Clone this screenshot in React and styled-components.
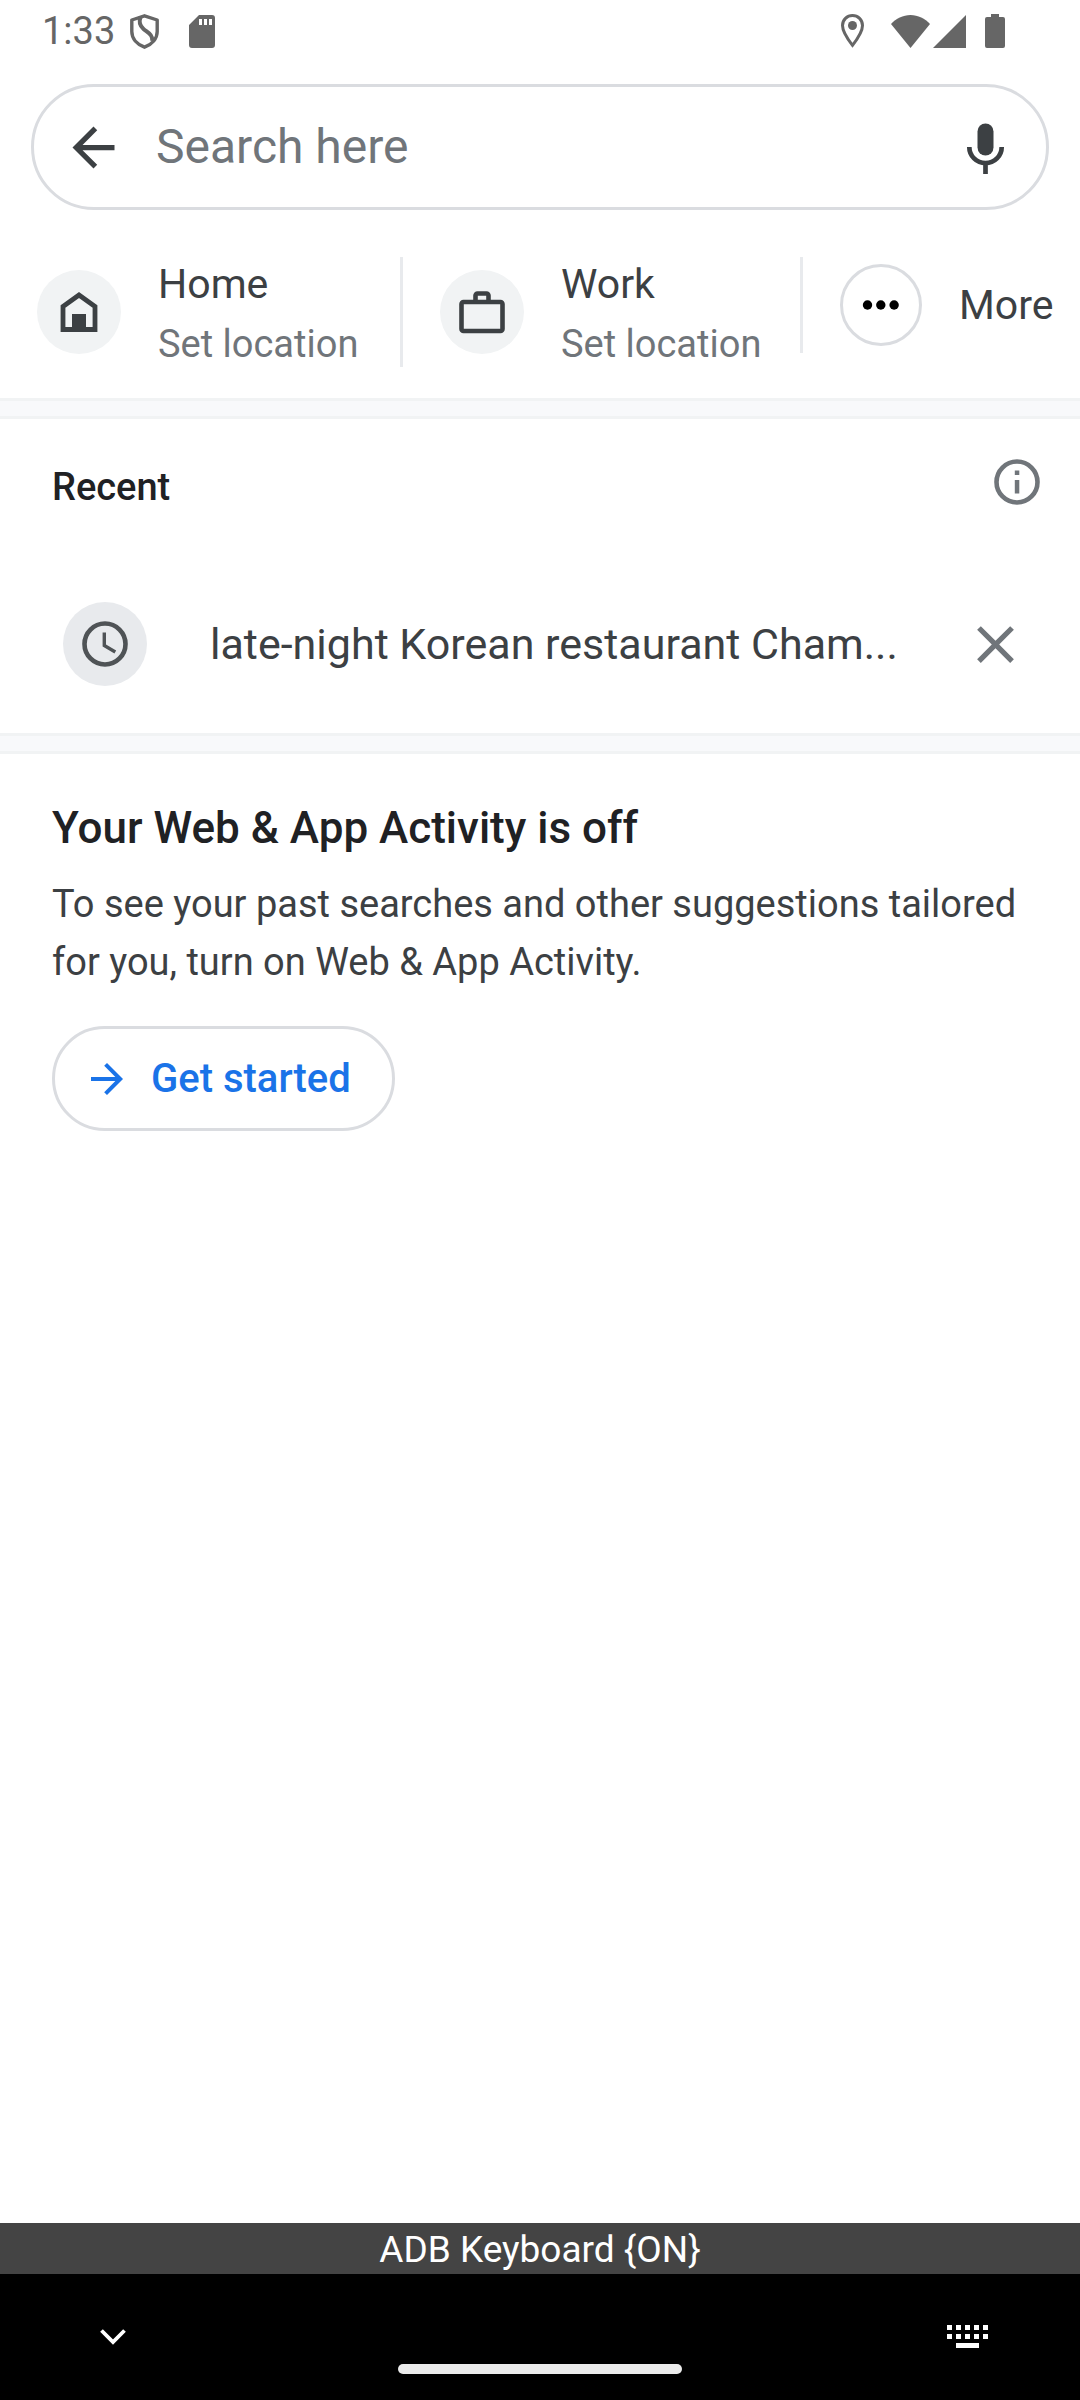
import React from "react";
import styled, { createGlobalStyle } from "styled-components";

const color = {
  ink: "#202124",
  text: "#3c4043",
  muted: "#70757a",
  line: "#dadce0",
  divider: "#e8eaed",
  chip: "#f1f3f4",
  blue: "#1a73e8",
  status: "#666666",
};

const GlobalStyle = createGlobalStyle`
  *, *::before, *::after { box-sizing: border-box; }
  body { margin: 0; background: #fff; }
  body, button, input { font-family: Roboto, "Liberation Sans", sans-serif; }
  button { border: 0; padding: 0; background: none; color: inherit; cursor: pointer; }
  svg { display: block; flex: none; }
  h1, h2, p { margin: 0; }
`;

const Screen = styled.div`
  display: flex;
  flex-direction: column;
  min-height: 100vh;
  color: ${color.text};
`;

const StatusBar = styled.header`
  display: flex;
  align-items: center;
  justify-content: space-between;
  height: 62px;
  padding: 0 75px 0 42px;
  color: ${color.status};
`;

const StatusGroup = styled.div`
  display: flex;
  align-items: center;
  gap: ${(p) => p.$gap}px;
`;

const Clock = styled.time`
  min-width: 88px;
  font-size: 38px;
  line-height: 44px;
`;

const Main = styled.main`
  flex: 1;
`;

const SearchBar = styled.form`
  display: flex;
  align-items: center;
  gap: 31px;
  height: 126px;
  margin: 22px 31px 0;
  padding: 0 29px 0 28px;
  border: 3px solid ${color.line};
  border-radius: 63px;
`;

const SearchInput = styled.input`
  flex: 1;
  min-width: 0;
  padding: 0;
  border: 0;
  outline: 0;
  background: none;
  font-size: 48px;
  line-height: 60px;
  color: ${color.text};
  &::placeholder {
    color: ${color.muted};
    opacity: 1;
  }
`;

const IconButton = styled.button`
  display: grid;
  place-items: center;
  flex: none;
  width: ${(p) => p.$size || 63}px;
  height: ${(p) => p.$size || 63}px;
  color: ${(p) => p.$color || color.text};
`;

const Shortcuts = styled.nav`
  display: grid;
  grid-template-columns: 400px 400px 1fr;
  align-items: start;
  padding: 47px 0 31px;
`;

const Shortcut = styled.button`
  display: flex;
  align-items: center;
  gap: 37px;
  height: ${(p) => (p.$compact ? 96 : 110)}px;
  padding-left: 37px;
  border-left: ${(p) => (p.$divided ? `3px solid ${color.divider}` : "0")};
  text-align: left;
  white-space: nowrap;
`;

const Disc = styled.span`
  display: grid;
  place-items: center;
  flex: none;
  width: ${(p) => (p.$outlined ? 82 : 84)}px;
  height: ${(p) => (p.$outlined ? 82 : 84)}px;
  border-radius: 50%;
  background: ${(p) => p.$fill || "transparent"};
  border: ${(p) => (p.$outlined ? `3px solid ${color.line}` : "0")};
  color: ${(p) => p.$ink || color.text};
`;

const ShortcutText = styled.span`
  display: flex;
  flex-direction: column;
  gap: 12px;
`;

const ShortcutName = styled.span`
  font-size: 41px;
  line-height: 52px;
`;

const ShortcutHint = styled.span`
  font-size: 38px;
  line-height: 44px;
  color: ${color.muted};
`;

const Band = styled.div`
  height: 21px;
  border: solid #f1f3f4;
  border-width: 3px 0;
  background: #f8f9fb;
`;

const RecentHeader = styled.div`
  display: flex;
  align-items: flex-start;
  justify-content: space-between;
  padding: 37px 37px 63px 52px;
`;

const SectionTitle = styled.h2`
  font-size: 38px;
  line-height: 62px;
  font-weight: 500;
  color: ${color.ink};
`;

const RecentRow = styled.div`
  display: flex;
  align-items: center;
  gap: 53px;
  height: 126px;
  margin-bottom: 26px;
  padding: 0 53px 0 63px;
`;

const RecentQuery = styled.button`
  display: flex;
  align-items: center;
  flex: 1;
  gap: 63px;
  min-width: 0;
  font-size: 43px;
  line-height: 58px;
  text-align: left;
`;

const QueryText = styled.span`
  overflow: hidden;
  white-space: nowrap;
`;

const Activity = styled.section`
  padding: 44px 52px 0;
`;

const ActivityTitle = styled.h2`
  font-size: 44px;
  line-height: 60px;
  font-weight: 500;
  color: ${color.ink};
`;

const ActivityText = styled.p`
  margin-top: 17px;
  font-size: 38px;
  line-height: 58px;
`;

const PillButton = styled.button`
  display: inline-flex;
  align-items: center;
  gap: 20px;
  height: 105px;
  margin-top: 35px;
  padding: 0 41px 0 28px;
  border: 3px solid ${color.line};
  border-radius: 53px;
  font-size: 40px;
  line-height: 48px;
  font-weight: 500;
  color: ${color.blue};
`;

const KeyboardBar = styled.div`
  padding-top: 2px;
  background: #444;
  color: #fff;
  font-size: 37px;
  line-height: 49px;
  text-align: center;
`;

const SystemNav = styled.footer`
  display: grid;
  grid-template-columns: 50px 1fr 50px;
  align-items: center;
  height: 126px;
  padding: 0 88px;
  background: #000;
`;

const HomeHandle = styled.div`
  align-self: end;
  justify-self: center;
  width: 284px;
  height: 10px;
  margin-bottom: 26px;
  border-radius: 5px;
  background: #ebebeb;
`;

const Icon = ({ size = 63, path }) => (
  <svg width={size} height={size} viewBox="0 0 24 24" fill="currentColor" aria-hidden="true">
    <path d={path} />
  </svg>
);

const ARROW_BACK = "M20 11H7.83l5.59-5.59L12 4l-8 8 8 8 1.41-1.41L7.83 13H20v-2z";
const ARROW_FORWARD = "M12 4l-1.41 1.41L16.17 11H4v2h12.17l-5.58 5.59L12 20l8-8z";
const CLOSE =
  "M19 6.41L17.59 5 12 10.59 6.41 5 5 6.41 10.59 12 5 17.59 6.41 19 12 13.41 17.59 19 19 17.59 13.41 12z";

const ShieldIcon = () => (
  <svg width="29" height="35" viewBox="0 0 29 35" fill="none" stroke="currentColor" strokeWidth="3.4" aria-hidden="true">
    <path d="M14.5 1.8L27.2 6v11.500c0 7-5 12.800-12.700 15.700C6.800 30.300 1.800 24.500 1.800 17.500V6z" strokeLinejoin="round" />
    <path d="M10.500 3c-1.800 5-1 8.500 3 12s9.500 5.500 8.800 12" strokeWidth="4" />
  </svg>
);

const SdCardIcon = () => (
  <svg width="26" height="33" viewBox="0 0 26 33" aria-hidden="true">
    <path
      fill="currentColor"
      fillRule="evenodd"
      d="M10 0h13a3 3 0 0 1 3 3v27a3 3 0 0 1-3 3H3a3 3 0 0 1-3-3V10zM10 4v6h3V4zm5 0v6h3V4zm5 0v6h3V4z"
    />
  </svg>
);

const PinIcon = () => (
  <svg width="23" height="34" viewBox="0 0 23 34" aria-hidden="true">
    <path
      d="M11.500 1.500c5.500 0 10 4.400 10 10 0 7-10 19.800-10 19.800S1.500 18.500 1.500 11.500c0-5.600 4.500-10 10-10z"
      fill="none"
      stroke="currentColor"
      strokeWidth="3"
    />
    <circle cx="11.500" cy="11.500" r="4.500" fill="currentColor" />
  </svg>
);

const WifiIcon = () => (
  <svg width="39" height="33" viewBox="0 0 39 33" fill="currentColor" aria-hidden="true">
    <path d="M19.500 33L0 9C5 3.500 12 0 19.500 0S34 3.500 39 9z" />
  </svg>
);

const SignalIcon = () => (
  <svg width="33" height="33" viewBox="0 0 33 33" fill="currentColor" aria-hidden="true">
    <path d="M33 0v33H0z" />
  </svg>
);

const BatteryIcon = () => (
  <svg width="20" height="34" viewBox="0 0 20 34" fill="currentColor" aria-hidden="true">
    <path d="M6 0h8v3h4a2 2 0 0 1 2 2v27a2 2 0 0 1-2 2H2a2 2 0 0 1-2-2V5a2 2 0 0 1 2-2h4z" />
  </svg>
);

const MicIcon = () => (
  <svg width="63" height="63" viewBox="0 0 63 63" aria-hidden="true">
    <rect x="23.500" y="7.500" width="16" height="32" rx="8" fill="currentColor" />
    <path d="M15.300 31a16.200 16.200 0 0 0 32.400 0M31.500 47v11" fill="none" stroke="currentColor" strokeWidth="4.700" />
  </svg>
);

const HouseIcon = () => (
  <svg width="38" height="42" viewBox="0 0 38 42" aria-hidden="true">
    <path d="M3 38.500V15.500L19 4l16 11.500v23z" fill="none" stroke="currentColor" strokeWidth="4.800" />
    <path d="M12 23h14v16H12z" fill="currentColor" />
  </svg>
);

const BriefcaseIcon = () => (
  <svg width="46" height="46" viewBox="0 0 46 46" fill="none" stroke="currentColor" strokeWidth="4.600" aria-hidden="true">
    <rect x="2.500" y="13" width="41" height="29" rx="2" />
    <path d="M16.500 13V6.500a2 2 0 0 1 2-2h9a2 2 0 0 1 2 2V13" />
  </svg>
);

const DotsIcon = () => (
  <svg width="38" height="10" viewBox="0 0 38 10" fill="currentColor" aria-hidden="true">
    <circle cx="5.500" cy="5" r="4.700" />
    <circle cx="18.800" cy="5" r="4.700" />
    <circle cx="32.100" cy="5" r="4.700" />
  </svg>
);

const InfoIcon = () => (
  <svg width="46" height="46" viewBox="0 0 46 46" aria-hidden="true">
    <circle cx="23" cy="23" r="20.500" fill="none" stroke="currentColor" strokeWidth="4.600" />
    <path d="M20.800 11.500h4.500v4.500h-4.500zM20.800 21h4.500v13.500h-4.500z" fill="currentColor" />
  </svg>
);

const ClockIcon = () => (
  <svg width="46" height="46" viewBox="0 0 46 46" fill="none" stroke="currentColor" aria-hidden="true">
    <circle cx="23" cy="23" r="20.500" strokeWidth="4.600" />
    <path d="M22.300 11.500v13l11 6.500" strokeWidth="3.400" />
  </svg>
);

const ChevronIcon = () => (
  <svg width="26" height="16" viewBox="0 0 26 16" fill="none" stroke="currentColor" strokeWidth="3.800" aria-hidden="true">
    <path d="M1.500 1.500L13 13 24.500 1.500" />
  </svg>
);

const KeyboardIcon = () => (
  <svg width="41" height="24" viewBox="0 0 41 24" fill="currentColor" aria-hidden="true">
    {[0, 9].map((y) =>
      [0, 9, 18, 27, 36].map((x) => <rect key={`${x}-${y}`} x={x} y={y} width="5" height="5" />)
    )}
    <rect x="9" y="18" width="23" height="5" />
  </svg>
);

const places = [
  { name: "Home", hint: "Set location", icon: <HouseIcon /> },
  { name: "Work", hint: "Set location", icon: <BriefcaseIcon /> },
];

export default function App() {
  return (
    <Screen>
      <GlobalStyle />
      <StatusBar>
        <StatusGroup $gap={30}>
          <StatusGroup $gap={0}>
            <Clock>1:33</Clock>
            <ShieldIcon />
          </StatusGroup>
          <SdCardIcon />
        </StatusGroup>
        <StatusGroup $gap={27}>
          <PinIcon />
          <StatusGroup $gap={19}>
            <StatusGroup $gap={3}>
              <WifiIcon />
              <SignalIcon />
            </StatusGroup>
            <BatteryIcon />
          </StatusGroup>
        </StatusGroup>
      </StatusBar>

      <Main>
        <SearchBar role="search" onSubmit={(e) => e.preventDefault()}>
          <IconButton type="button" aria-label="Back">
            <Icon path={ARROW_BACK} />
          </IconButton>
          <SearchInput type="text" aria-label="Search here" placeholder="Search here" />
          <IconButton type="button" aria-label="Voice search">
            <MicIcon />
          </IconButton>
        </SearchBar>

        <Shortcuts aria-label="Shortcuts">
          {places.map((place, i) => (
            <Shortcut key={place.name} type="button" $divided={i > 0}>
              <Disc $fill={color.chip}>{place.icon}</Disc>
              <ShortcutText>
                <ShortcutName>{place.name}</ShortcutName>
                <ShortcutHint>{place.hint}</ShortcutHint>
              </ShortcutText>
            </Shortcut>
          ))}
          <Shortcut type="button" $divided $compact>
            <Disc $outlined $ink="#000">
              <DotsIcon />
            </Disc>
            <ShortcutName>More</ShortcutName>
          </Shortcut>
        </Shortcuts>

        <Band />

        <section>
          <RecentHeader>
            <SectionTitle>Recent</SectionTitle>
            <IconButton type="button" aria-label="About recent searches" $size={52} $color={color.muted}>
              <InfoIcon />
            </IconButton>
          </RecentHeader>
          <RecentRow>
            <RecentQuery type="button">
              <Disc $fill={color.divider} $ink="#4f5356">
                <ClockIcon />
              </Disc>
              <QueryText>late-night Korean restaurant Cham...</QueryText>
            </RecentQuery>
            <IconButton type="button" aria-label="Remove" $color={color.muted}>
              <Icon path={CLOSE} />
            </IconButton>
          </RecentRow>
        </section>

        <Band />

        <Activity>
          <ActivityTitle>Your Web &amp; App Activity is off</ActivityTitle>
          <ActivityText>
            To see your past searches and other suggestions tailored for you, turn on Web &amp; App Activity.
          </ActivityText>
          <PillButton type="button">
            <Icon size={48} path={ARROW_FORWARD} />
            Get started
          </PillButton>
        </Activity>
      </Main>

      <KeyboardBar>ADB Keyboard {"{ON}"}</KeyboardBar>
      <SystemNav>
        <IconButton type="button" aria-label="Hide keyboard" $size={50} $color="#fff">
          <ChevronIcon />
        </IconButton>
        <HomeHandle />
        <IconButton type="button" aria-label="Switch keyboard" $size={50} $color="#fff">
          <KeyboardIcon />
        </IconButton>
      </SystemNav>
    </Screen>
  );
}
